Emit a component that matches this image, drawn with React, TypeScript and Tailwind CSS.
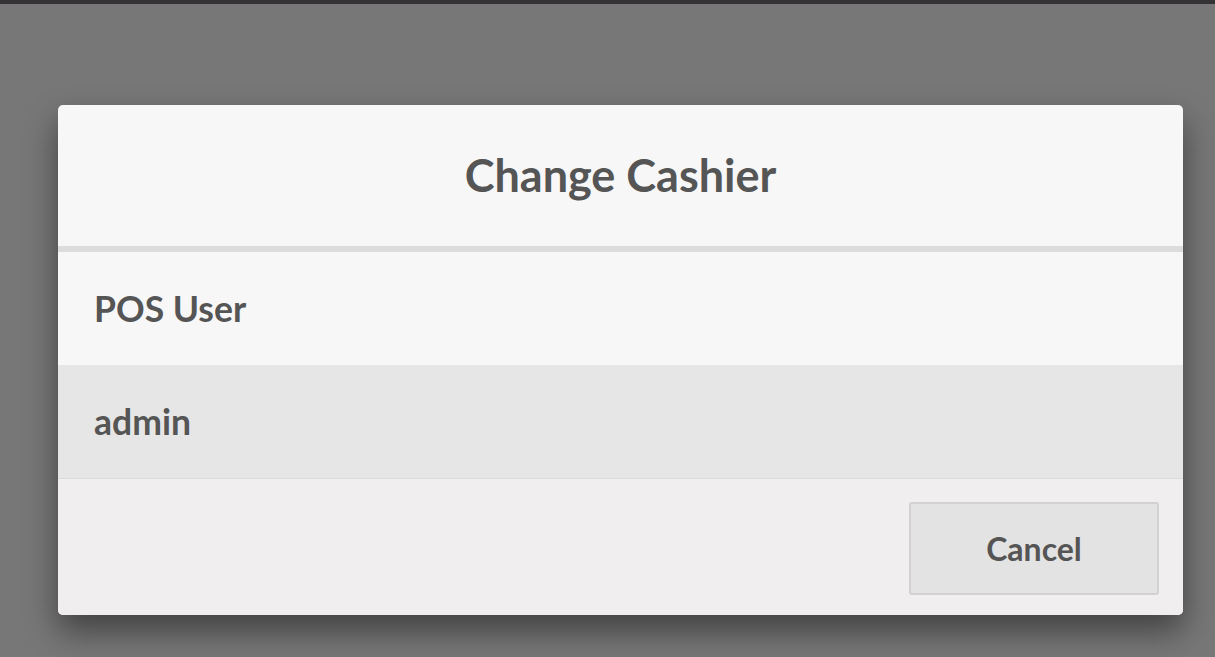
const users = ["POS User", "admin"];

export default function App() {
  return (
    <div className="h-[657px] w-[1215px] bg-[#777777] overflow-hidden font-['Lato',sans-serif] text-[#555555]">
      <div className="h-[4px] bg-[#353236]" />
      <div className="pt-[101px] pl-[58px]">
        <div className="w-[1125px] rounded-[5px] overflow-hidden bg-[#f7f7f7] shadow-[0_16px_32px_rgba(0,0,0,0.45)]">
          <div className="h-[147px] flex items-center justify-center border-b-[6px] border-[#dcdcdc]">
            <h1 className="text-[45px] font-bold leading-none">Change Cashier</h1>
          </div>
          {users.map((name, i) => (
            <div
              key={name}
              className={`flex items-center pl-[36px] text-[35.5px] font-bold ${
                i === 1 ? "h-[114px] bg-[#e6e6e6] border-b border-[#dadada]" : "h-[113px] bg-[#f7f7f7]"
              }`}
            >
              {name}
            </div>
          ))}
          <div className="h-[136px] bg-[#f0eeee] flex items-start justify-end pt-[23px] pr-[24px]">
            <button className="w-[250px] h-[93px] rounded-[3px] border-2 border-[#d2d2d2] bg-[#e4e3e3] text-[32px] font-bold text-[#555555]">
              Cancel
            </button>
          </div>
        </div>
      </div>
    </div>
  );
}
